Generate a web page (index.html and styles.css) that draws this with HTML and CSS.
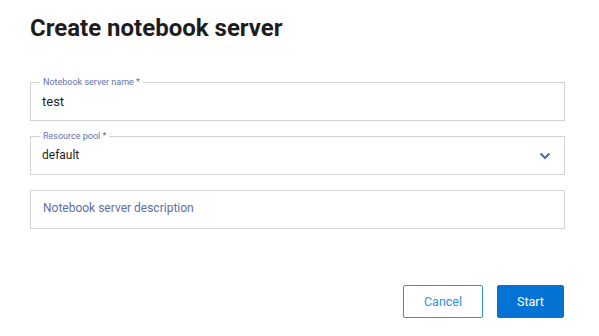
FILE: index.html
```html
<!DOCTYPE html>
<html lang="en">
<head>
  <meta charset="UTF-8">
  <meta name="viewport" content="width=device-width, initial-scale=1.0">
  <title>Create notebook server</title>
  <link rel="stylesheet" href="styles.css">
</head>
<body>
  <main class="page">
    <h1 class="title">Create notebook server</h1>

    <!-- Server form -->
    <form class="form">
      <fieldset class="field">
        <legend>Notebook server name *</legend>
        <input type="text" class="field-input" value="test">
      </fieldset>

      <fieldset class="field field-select">
        <legend>Resource pool *</legend>
        <div class="field-input select-value">default</div>
        <svg class="chevron" width="12" height="8" viewBox="0 0 12 8">
          <path d="M1.5 1.5 L6 6 L10.5 1.5" fill="none" stroke="#5b6aa6" stroke-width="2.2"/>
        </svg>
      </fieldset>

      <div class="field-plain">
        <input type="text" class="field-input" placeholder="Notebook server description">
      </div>
    </form>

    <!-- Actions -->
    <div class="actions">
      <button class="btn btn-outline">Cancel</button>
      <button class="btn btn-primary">Start</button>
    </div>
  </main>
</body>
</html>
```

FILE: styles.css
```css
/* Base Styling */
* {
  margin: 0;
  padding: 0;
  box-sizing: border-box;
}

body {
  font-family: Roboto, "Liberation Sans", Arial, sans-serif;
  background-color: #fff;
  color: #1f1f1f;
}

.page {
  display: flex;
  flex-direction: column;
  padding: 12px 34px 0 30px;
}

.title {
  font-size: 24px;
  line-height: 32px;
  font-weight: 700;
  color: #1d1d1d;
}

/* Form Styling */
.form {
  display: flex;
  flex-direction: column;
  margin-top: 32px;
}

.field {
  border: 1px solid #d3d3d3;
  padding: 0 12px 6px 11px;
  display: flex;
  align-items: center;
}

.field legend {
  font-size: 9px;
  line-height: 12px;
  color: #6471a9;
  margin-left: -2px;
  padding: 0 3px;
}

.field + .field {
  margin-top: 9px;
}

.field-input {
  flex: 1;
  height: 26px;
  border: none;
  outline: none;
  background: transparent;
  font-family: inherit;
  font-size: 13px;
  color: #1f1f1f;
}

.select-value {
  display: flex;
  align-items: center;
  font-size: 12px;
}

.chevron {
  margin-right: 1px;
  margin-top: 1px;
}

.field-plain {
  margin-top: 15px;
  height: 39px;
  border: 1px solid #d3d3d3;
  padding: 0 12px 3px;
  display: flex;
  align-items: center;
}

.field-plain .field-input {
  font-size: 12px;
}

.field-plain .field-input::placeholder {
  color: #5e6ea6;
  opacity: 1;
}

/* Buttons */
.actions {
  display: flex;
  justify-content: flex-end;
  gap: 14px;
  margin-top: 56px;
  margin-right: 1px;
}

.btn {
  height: 33px;
  font-family: inherit;
  font-size: 12.5px;
  border-radius: 2px;
  cursor: pointer;
}

.btn-outline {
  width: 80px;
  background-color: #fff;
  border: 1px solid #2f8fe3;
  color: #2f8fe3;
}

.btn-primary {
  width: 67px;
  background-color: #0573d3;
  border: 1px solid #0573d3;
  color: #fff;
}
```
